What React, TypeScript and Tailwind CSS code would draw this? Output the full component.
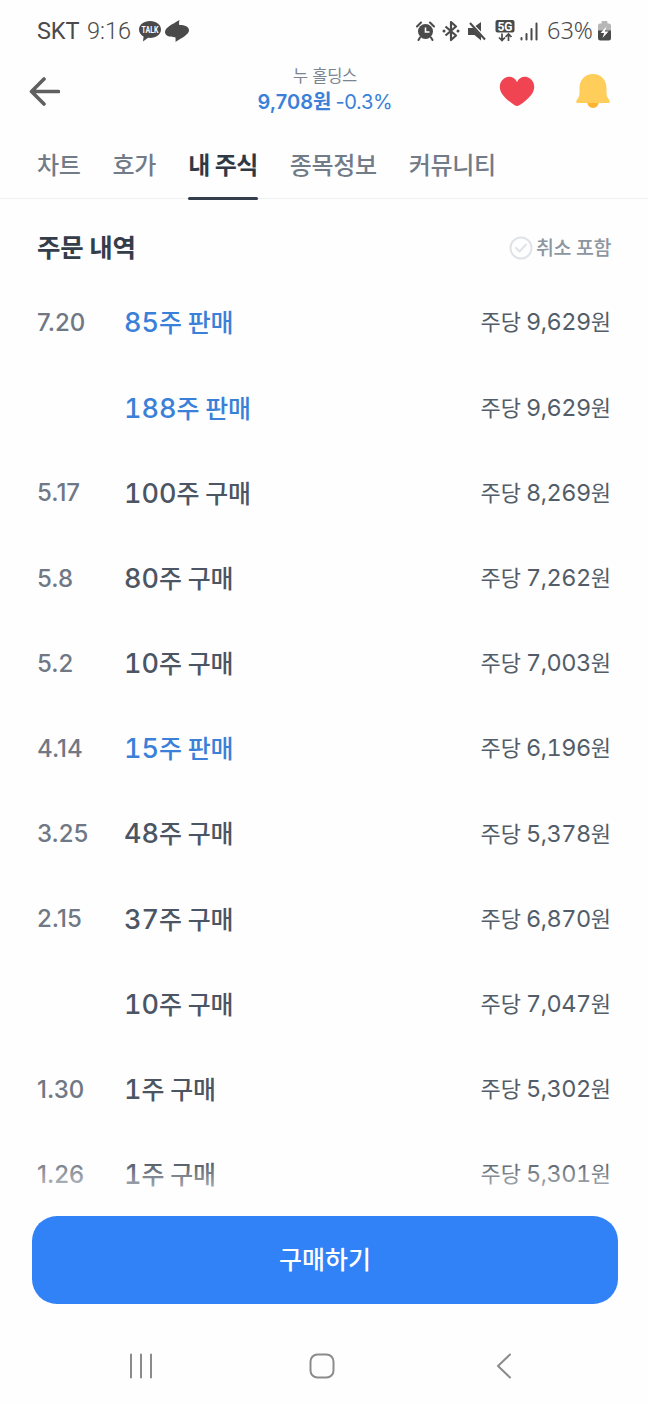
const tabs = ["차트", "호가", "내 주식", "종목정보", "커뮤니티"];

const orders = [
  { date: "7.20", count: "85", type: "판매", price: "9,629" },
  { date: "", count: "188", type: "판매", price: "9,629" },
  { date: "5.17", count: "100", type: "구매", price: "8,269" },
  { date: "5.8", count: "80", type: "구매", price: "7,262" },
  { date: "5.2", count: "10", type: "구매", price: "7,003" },
  { date: "4.14", count: "15", type: "판매", price: "6,196" },
  { date: "3.25", count: "48", type: "구매", price: "5,378" },
  { date: "2.15", count: "37", type: "구매", price: "6,870" },
  { date: "", count: "10", type: "구매", price: "7,047" },
  { date: "1.30", count: "1", type: "구매", price: "5,302" },
  { date: "1.26", count: "1", type: "구매", price: "5,301" },
];

function StatusBar() {
  return (
    <div className="flex h-[62px] items-center justify-between pl-[37px] pr-[36px] text-[#4a4a4a]">
      <div className="flex items-center font-[Roboto,sans-serif]">
        <span className="w-[50px] whitespace-nowrap pt-0.5 text-[23.5px] tracking-[-0.1px]">SKT</span>
        <span className="w-[51px] whitespace-nowrap pt-0.5 text-[23.5px] font-light">9:16</span>
        <svg className="h-6 w-6" viewBox="0 0 24 24" fill="currentColor">
          <path d="M12 2C5.6 2 1 5.700 1 10.500c0 3 1.800 5.500 4.600 7L5 22.500l5-3.700c.7.1 1.300.1 2 .1 6.400 0 11-3.700 11-8.500S18.400 2 12 2z" />
          <text x="12" y="13.500" textAnchor="middle" fill="#fff" fontSize="8.500" fontWeight="700" textLength="17" lengthAdjust="spacingAndGlyphs">
            TALK
          </text>
        </svg>
        <svg className="ml-[3px] h-6 w-6" viewBox="0 0 24 24" fill="currentColor">
          <path d="M14.500 1C14 3 13.900 4.500 14.300 6 20 6 24 7.800 24 11.300c0 4.200-6.500 7.200-13.500 11.700.2-2 .2-3.500-.2-4.800C4 18.200 0 16.500 0 13c0-4.500 7-7.500 14.500-12z" />
        </svg>
      </div>

      <div className="flex items-center">
        <svg className="h-[22px] w-[19px]" viewBox="0 0 19 22" fill="none" stroke="currentColor">
          <circle cx="9.500" cy="11.500" r="7.500" fill="currentColor" stroke="none" />
          <path d="M1 6.500 5 2.500M18 6.500l-4-4M4 17.500 2.500 20M15 17.500l1.500 2.500" strokeWidth="2" strokeLinecap="round" />
          <path d="M9.500 7.500v4.500h4" stroke="#fff" strokeWidth="1.600" />
        </svg>
        <svg className="ml-[7px] h-[22px] w-[18px]" viewBox="0 0 18 22" fill="none" stroke="currentColor" strokeWidth="2.200">
          <path d="m3.500 6.500 10.500 9-5 4.500V2l5 4.500-10.500 9" strokeLinejoin="round" />
          <circle cx="2" cy="11" r="1.500" fill="currentColor" stroke="none" />
          <circle cx="16" cy="11" r="1.500" fill="currentColor" stroke="none" />
        </svg>
        <svg className="ml-2 h-[22px] w-[18px]" viewBox="0 0 18 22">
          <path d="M0 8h5.500l7.500 8v4.500L6.500 15H0zM13 2v9.500L7.500 6z" fill="currentColor" />
          <path d="m2 3 15 16.500" stroke="currentColor" strokeWidth="2" />
        </svg>
        <svg className="ml-[9px] h-[22px] w-5" viewBox="0 0 20 22">
          <rect x="0.500" width="19" height="12.500" rx="2" fill="currentColor" />
          <text x="10" y="10.500" textAnchor="middle" fill="#fff" fontSize="12" fontWeight="700" fontFamily="Roboto">
            5G
          </text>
          <path d="M7 13.500v7M4 17.500l3 3 3-3M13.500 21v-7M10.500 17l3-3 3 3" fill="none" stroke="currentColor" strokeWidth="1.700" />
        </svg>
        <svg className="ml-[5px] h-[22px] w-[18px]" viewBox="0 0 18 22" stroke="currentColor" strokeWidth="2" strokeLinecap="round">
          <path d="M1.500 18v1.500M6.500 14v5.500M11.500 9v10.500M16.500 3.500v16" />
        </svg>
        <span className="ml-[9px] w-[50px] whitespace-nowrap font-['Noto_Sans',sans-serif] text-[23.5px] font-light">
          63%
        </span>
        <svg className="h-5 w-[15px]" viewBox="0 0 15 20">
          <path d="M4.500 2.500V1q0-1 1-1h4q1 0 1 1v1.500h1.500q2 0 2 2V10H1V4.500q0-2 2-2z" fill="#b7b7b7" />
          <path d="M1 9.500h13V17q0 2.500-2.500 2.500h-8Q1 19.500 1 17z" fill="currentColor" />
          <path d="m9.500 5.500-6 6.500h3.700L5.500 17l6-6.500H7.800z" fill="#fff" />
        </svg>
      </div>
    </div>
  );
}

function Header() {
  return (
    <header className="flex h-[60px] items-center justify-between pl-[28px] pr-[38px]">
      <svg className="h-8 w-8" viewBox="0 0 32 32" fill="none" stroke="#606060" strokeWidth="3.600" strokeLinecap="round" strokeLinejoin="round">
        <path d="M30.500 15.500H4M16 3 3.500 15.500 16 28" />
      </svg>
      <div className="ml-[91px] flex w-[136px] flex-col items-center whitespace-nowrap pb-[6px]">
        <span className="text-[16.5px] leading-[25px] tracking-[-0.3px] text-[#7b8491]">누 홀딩스</span>
        <div className="flex text-[20px] leading-[26px] text-[#3b80d8]">
          <span className="font-semibold">9,708원</span>
          <span className="ml-1 tracking-[-0.3px]">-0.3%</span>
        </div>
      </div>
      <div className="flex items-center justify-end gap-[41px]">
        <svg className="h-[34px] w-9" viewBox="0 0 36 34">
          <path
            d="M18 7C15 1 9 .8 5 3.500-.5 7.500-.2 14.500 3.500 19.500c3 4.200 7.500 7.700 12.200 10.800q2.300 1.600 4.600 0c4.700-3.100 9.200-6.600 12.200-10.800 3.700-5 4-12-1.500-16C27 .8 21 1 18 7z"
            fill="#f04452"
          />
        </svg>
        <svg className="mb-[2px] h-9 w-[34px]" viewBox="0 0 34 36">
          <path d="M11 28h12q-.5 7-6 7t-6-7z" fill="#ffb331" />
          <path d="M17 1C9 1 3.500 7 3.500 15v5c0 3-1 4.500-2.700 7-1.200 2-.5 3 1.200 3h30c1.700 0 2.400-1 1.200-3-1.700-2.500-2.700-4-2.700-7v-5C30.500 7 25 1 17 1z" fill="#ffcd59" />
        </svg>
      </div>
    </header>
  );
}

export default function App() {
  return (
    <div className="flex h-[1404px] w-[648px] flex-col overflow-hidden bg-[#fefefe] font-[Inter,'Noto_Sans_CJK_KR',sans-serif]">
      <StatusBar />
      <Header />

      <nav className="flex h-[77px] gap-8 border-b border-[#eff0f2] pl-[37px]">
        {tabs.map((tab) => (
          <div
            key={tab}
            className={
              tab === "내 주식"
                ? "relative flex h-[78px] items-center whitespace-nowrap pt-[9px] text-[24px] font-bold tracking-[-0.6px] text-[#2f3946]"
                : "flex h-[78px] items-center whitespace-nowrap pt-[9px] text-[24px] font-medium tracking-[-0.3px] text-[#727b88]"
            }
          >
            {tab}
            {tab === "내 주식" && <div className="absolute inset-x-0 bottom-0 h-[3px] rounded-full bg-[#333d4b]"></div>}
          </div>
        ))}
      </nav>

      <div className="flex h-[80px] items-center justify-between px-[37px]">
        <h2 className="pt-[18px] text-[25.5px] font-bold tracking-[-0.2px] text-[#343d4a]">주문 내역</h2>
        <div className="flex items-center gap-[3px] pt-[18px]">
          <svg className="h-6 w-6" viewBox="0 0 24 24" fill="none" stroke="#e0e3e7" strokeWidth="2">
            <circle cx="12" cy="12" r="10.500" />
            <path d="m7 12 3.500 3.500 6.500-7" strokeLinecap="round" strokeLinejoin="round" />
          </svg>
          <span className="pt-0.5 text-[19.5px] font-medium tracking-[-0.4px] text-[#8c95a1]">취소 포함</span>
        </div>
      </div>

      <main className="relative h-[937px] overflow-hidden px-[37px]">
        {orders.map((order, i) => (
          <div key={i} className="flex h-[85.2px] items-center whitespace-nowrap pt-[3px]">
            <span className="w-[87px] text-[24px] font-medium text-[#6f7884]">{order.date}</span>
            <div
              className={
                order.type === "판매"
                  ? "flex flex-1 items-baseline pt-px text-[25px] font-medium text-[#3b80d8]"
                  : "flex flex-1 items-baseline pt-px text-[25px] font-medium text-[#4b5563]"
              }
            >
              <span className="text-[27px] tabular-nums">{order.count}</span>
              <span className="tracking-[-0.2px] [word-spacing:-0.5px]">주 {order.type}</span>
            </div>
            <div className="flex items-baseline pb-[2px] text-[22px] text-[#535d69]">
              <span>주당</span>
              <span className="ml-[5px] text-[23.5px] tracking-[-0.5px] tabular-nums">{order.price}</span>
              <span>원</span>
            </div>
          </div>
        ))}
        <div className="absolute inset-x-0 bottom-0 h-[56px] bg-gradient-to-t from-[#fefefe] to-transparent"></div>
      </main>

      <div className="pl-8 pr-[30px]">
        <button className="h-[88px] w-full rounded-[25px] bg-[#3182f6] pt-[2px] text-[25px] font-medium text-white">구매하기</button>
      </div>

      <div className="flex h-[100px] items-center pt-6 text-[#8b8b8b]">
        <svg className="ml-[128px] h-[26px] w-[26px]" viewBox="0 0 26 26" stroke="currentColor" strokeWidth="2">
          <path d="M3 1.500v23M13 1.500v23M23 1.500v23" strokeLinecap="round" />
        </svg>
        <svg className="ml-[155px] h-[26px] w-[26px]" viewBox="0 0 26 26" fill="none" stroke="currentColor" strokeWidth="2">
          <rect x="1.500" y="1.500" width="23" height="23" rx="7" />
        </svg>
        <svg className="ml-[161px] h-[26px] w-4" viewBox="0 0 16 26" fill="none" stroke="currentColor" strokeWidth="2">
          <path d="M14 1.500 2 13l12 11.500" strokeLinecap="round" strokeLinejoin="round" />
        </svg>
      </div>
    </div>
  );
}
